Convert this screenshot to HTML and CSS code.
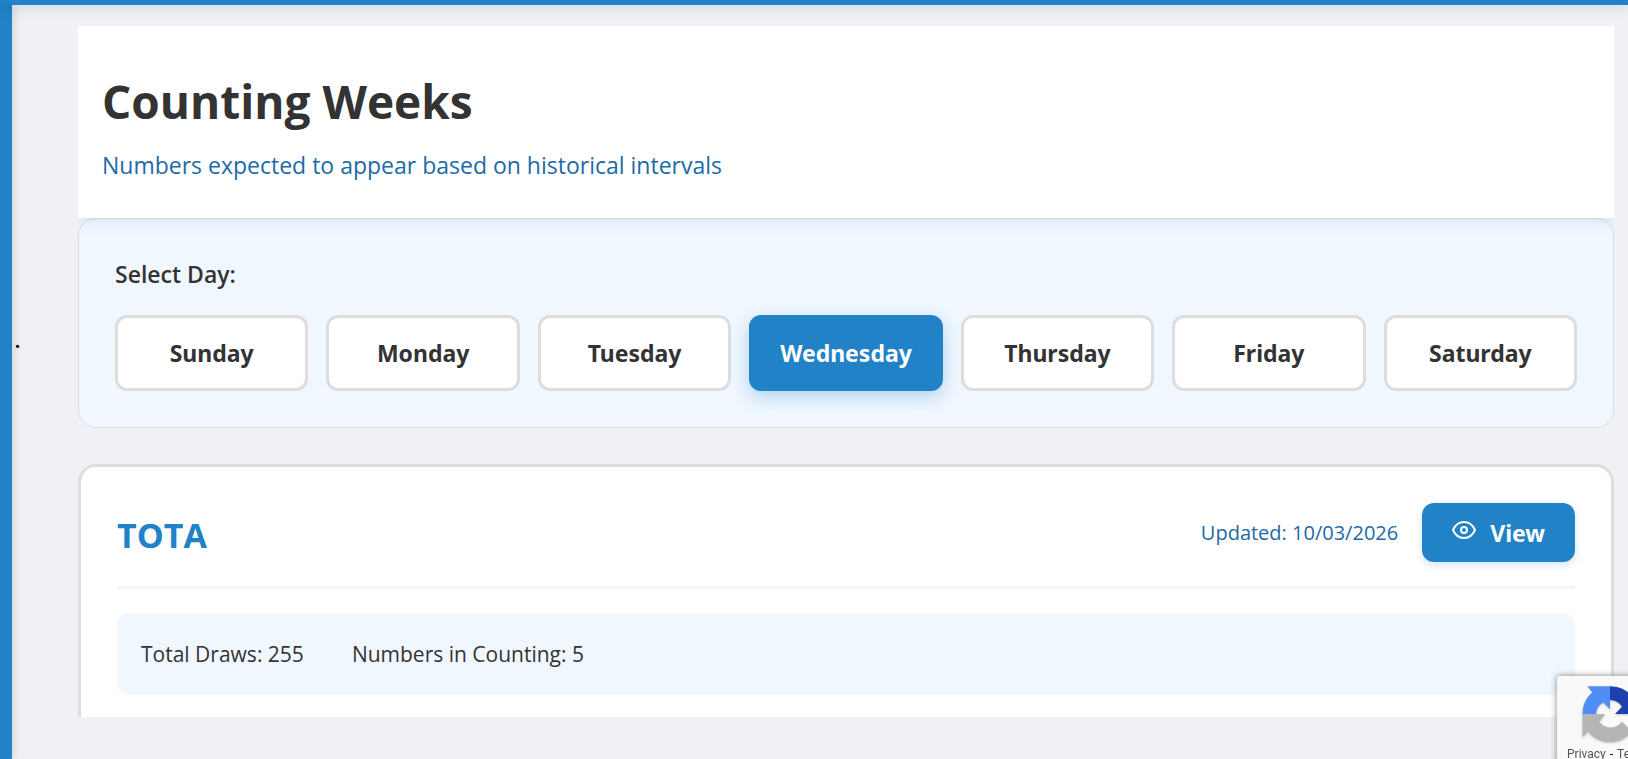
FILE: index.html
```html
<!DOCTYPE html>
<html lang="en">
<head>
<meta charset="utf-8">
<title>Counting Weeks</title>
<link rel="stylesheet" href="styles.css">
</head>
<body>
<div class="topbar"></div>
<div class="shell">
  <aside class="sidebar"></aside>
  <div class="rail">.</div>
  <main class="content">
    <header class="page-header">
      <h1 class="page-title">Counting Weeks</h1>
      <p class="page-subtitle">Numbers expected to appear based on historical intervals</p>
    </header>
    <section class="days" aria-labelledby="day-label">
      <h2 class="days-label" id="day-label">Select Day:</h2>
      <div class="day-grid">
        <button class="day" type="button">Sunday</button>
        <button class="day" type="button">Monday</button>
        <button class="day" type="button">Tuesday</button>
        <button class="day day-active" type="button" aria-pressed="true">Wednesday</button>
        <button class="day" type="button">Thursday</button>
        <button class="day" type="button">Friday</button>
        <button class="day" type="button">Saturday</button>
      </div>
    </section>
    <article class="card">
      <div class="card-head">
        <h2 class="card-title">TOTA</h2>
        <div class="card-actions">
          <span class="updated">Updated: 10/03/2026</span>
          <button class="view" type="button">
            <svg class="eye" viewBox="0 0 24 18" aria-hidden="true">
              <path d="M1 9C3.200 4 7.200 1 12 1s8.800 3 11 8c-2.200 5-6.200 8-11 8S3.200 14 1 9z"/>
              <circle cx="12" cy="9" r="3"/>
            </svg>
            View
          </button>
        </div>
      </div>
      <div class="stats">
        <span>Total Draws: 255</span>
        <span>Numbers in Counting: 5</span>
      </div>
    </article>
  </main>
</div>
<div class="recaptcha">
  <svg class="recaptcha-logo" viewBox="-28 -28 56 56" aria-hidden="true">
    <path fill="#b5b5b5" d="M-27.500 0V23.300L-22 17.800A28 28 0 0 0 22 17.500L12 7.700A14 14 0 0 1-10.700 7.700L-4.800 0z"/>
    <path fill="#4f8ff5" d="M-27.500 0A28 28 0 0 1-17.600-21.800L-22.600-27.700H0V-4.800L-6.700-11.500A14 14 0 0 0-14 0z"/>
    <path fill="#1f3fad" d="M0-27.700A28 28 0 0 1 22-17.600L27.500-23V0H5L12-7.200A14 14 0 0 0 0-14z"/>
  </svg>
  <div class="recaptcha-links"><a href="#">Privacy</a><span>-</span><a href="#">Terms</a></div>
</div>
</body>
</html>
```
FILE: styles.css
```css
* {
  box-sizing: border-box;
}

body {
  margin: 0;
  height: 100vh;
  display: flex;
  flex-direction: column;
  overflow: hidden;
  background: #f0f1f5;
  color: #333;
  font-family: "Segoe UI", "Open Sans", "Noto Sans", sans-serif;
}

h1, h2, p {
  margin: 0;
}

button {
  font-family: Tahoma, "Noto Sans", sans-serif;
  font-weight: 700;
  cursor: pointer;
}

.topbar {
  position: relative;
  z-index: 2;
  flex: none;
  height: 5px;
  background: #2182c8;
  box-shadow: 0 3px 12px rgba(0, 0, 0, 0.16);
}

.shell {
  flex: 1;
  min-height: 0;
  display: flex;
}

.sidebar {
  flex: none;
  width: 12px;
  background: #2182c8;
  box-shadow: 2px 0 10px rgba(0, 0, 0, 0.12);
}

.rail {
  flex: none;
  width: 66px;
  padding: 322px 2px 0;
  color: #000;
  font: 28px/24px "Liberation Serif", serif;
}

.content {
  flex: 1;
  min-width: 0;
  margin: 21px 14px 42px 0;
  overflow: hidden;
}

.page-header {
  position: relative;
  z-index: 1;
  padding: 42px 24px 33px;
  background: #fff;
  box-shadow: 0 2px 15px rgba(33, 130, 200, 0.16);
}

.page-title {
  font-size: 46px;
  line-height: 66px;
}

.page-subtitle {
  margin-top: 12px;
  font-size: 23px;
  line-height: 39px;
  color: #1d6aa8;
}

.days {
  padding: 36px;
  border: 1px solid #ddd;
  border-radius: 18px;
  background: #f0f7ff;
}

.days-label {
  font-size: 23px;
  font-weight: 600;
  line-height: 38px;
}

.day-grid {
  display: grid;
  grid-template-columns: repeat(7, 1fr);
  gap: 18px;
  margin-top: 22px;
}

.day {
  height: 76px;
  padding: 0;
  border: 3px solid #ddd;
  border-radius: 12px;
  background: #fff;
  color: #333;
  font-size: 23px;
}

.day-active {
  border-color: #2182c8;
  background: #2182c8;
  color: #fff;
  box-shadow: 0 6px 18px rgba(33, 130, 200, 0.3);
}

.card {
  margin-top: 36px;
  padding: 36px 36px 60px;
  border: 3px solid #ddd;
  border-radius: 18px;
  background: #fff;
}

.card-head {
  display: flex;
  align-items: flex-end;
  justify-content: space-between;
  padding-bottom: 24px;
  border-bottom: 3px solid #f0f7ff;
}

.card-title {
  color: #2182c8;
  font-size: 34px;
  line-height: 54px;
}

.card-actions {
  display: flex;
  align-items: center;
  gap: 24px;
}

.updated {
  color: #1d6aa8;
  font-size: 20px;
}

.view {
  display: flex;
  align-items: center;
  gap: 14px;
  height: 59px;
  padding: 0 30px;
  border: 0;
  border-radius: 12px;
  background: #2182c8;
  color: #fff;
  font-size: 23px;
  box-shadow: 0 3px 9px rgba(33, 130, 200, 0.2);
}

.eye {
  width: 24px;
  height: 18px;
  margin-bottom: 5px;
  fill: none;
  stroke: #fff;
  stroke-width: 2;
}

.stats {
  display: flex;
  gap: 48px;
  margin-top: 24px;
  padding: 24px;
  border-radius: 12px;
  background: #f0f7ff;
  font-size: 21px;
  line-height: 34px;
}

.recaptcha {
  position: fixed;
  z-index: 3;
  right: -185px;
  bottom: -7px;
  width: 256px;
  height: 90px;
  padding: 10px;
  border-radius: 3px;
  background: #f9f9f9;
  box-shadow: 0 0 6px #808080;
}

.recaptcha-logo {
  display: block;
  width: 56px;
  height: 56px;
  margin-left: 15px;
  filter: drop-shadow(0 1px 1px rgba(0, 0, 0, 0.2));
}

.recaptcha-links {
  display: flex;
  gap: 4px;
  color: #000;
  font: 12px/24px Roboto, sans-serif;
}

.recaptcha-links a {
  color: #555;
  text-decoration: none;
}
```
